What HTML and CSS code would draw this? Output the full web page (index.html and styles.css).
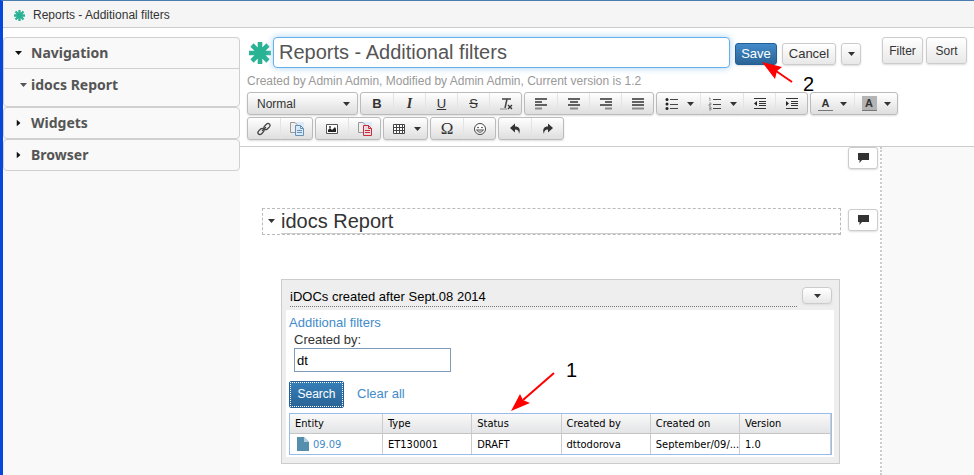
FILE: index.html
```html
<!DOCTYPE html>
<html lang="en">
<head>
<meta charset="utf-8">
<title>Reports - Additional filters</title>
<link rel="stylesheet" href="styles.css">
</head>
<body>
<svg class="defs" aria-hidden="true">
  <symbol id="star" viewBox="0 0 22 22"><path d="M11 0V22M0 11H22M3 3L19 19M19 3L3 19" stroke="#29b294" stroke-width="4.6" fill="none"/></symbol>
  <symbol id="caret" viewBox="0 0 7 4"><path d="M0 0H7L3.5 4Z" fill="currentColor"/></symbol>
  <symbol id="comment" viewBox="0 0 12 10"><path d="M1 0H12V7H5L2.500 10V7H1Z" fill="#333"/></symbol>
</svg>

<header class="tabbar"><svg class="tab-icon"><use href="#star"/></svg><span>Reports - Additional filters</span></header>

<div class="layout">
  <aside class="sidebar">
    <section class="panel open">
      <button class="panel-head"><svg class="caret"><use href="#caret"/></svg>Navigation</button>
      <a class="nav-item" href="#report"><svg class="caret"><use href="#caret"/></svg>idocs Report</a>
    </section>
    <section class="panel"><button class="panel-head"><svg class="caret side"><use href="#caret"/></svg>Widgets</button></section>
    <section class="panel"><button class="panel-head"><svg class="caret side"><use href="#caret"/></svg>Browser</button></section>
  </aside>

  <main class="main">
    <div class="editor-head">
      <div class="title-row">
        <svg class="title-icon"><use href="#star"/></svg>
        <input class="title-input" type="text" aria-label="Title" value="Reports - Additional filters">
        <div class="actions">
          <button class="btn primary">Save</button>
          <button class="btn cancel">Cancel</button>
          <button class="btn more" aria-label="More"><svg class="caret"><use href="#caret"/></svg></button>
        </div>
        <div class="tools">
          <button class="btn tool">Filter</button>
          <button class="btn tool">Sort</button>
        </div>
      </div>
      <p class="meta">Created by Admin Admin, Modified by Admin Admin, Current version is 1.2</p>
      <div class="toolbar">
        <div class="group"><button class="format">Normal<svg class="caret"><use href="#caret"/></svg></button></div>
        <div class="group">
          <button class="bold" aria-label="Bold">B</button>
          <button class="italic" aria-label="Italic">I</button>
          <button class="underline" aria-label="Underline">U</button>
          <button class="strike" aria-label="Strike">S</button>
          <button aria-label="Remove format"><svg class="icon" viewBox="0 0 16 16"><path d="M4 3H13M9 3L7 12" stroke="#444" stroke-width="1.500" fill="none"/><path d="M2 13H9" stroke="#888"/><path d="M10 9L14 13M14 9L10 13" stroke="#333" stroke-width="1.300"/></svg></button>
        </div>
        <div class="group">
          <button aria-label="Align left"><svg class="icon" viewBox="0 0 16 16"><path d="M2 3H14M2 6H9M2 9H14" stroke="#333" stroke-width="1.600"/><path d="M2 12.500H9" stroke="#888" stroke-width="2"/></svg></button>
          <button aria-label="Center"><svg class="icon" viewBox="0 0 16 16"><path d="M2 3H14M4 6H12M2 9H14" stroke="#333" stroke-width="1.600"/><path d="M4 12.500H12" stroke="#888" stroke-width="2"/></svg></button>
          <button aria-label="Align right"><svg class="icon" viewBox="0 0 16 16"><path d="M2 3H14M7 6H14M2 9H14" stroke="#333" stroke-width="1.600"/><path d="M7 12.500H14" stroke="#888" stroke-width="2"/></svg></button>
          <button aria-label="Justify"><svg class="icon" viewBox="0 0 16 16"><path d="M2 3H14M2 6H14M2 9H14" stroke="#333" stroke-width="1.600"/><path d="M2 12.500H14" stroke="#888" stroke-width="2"/></svg></button>
        </div>
        <div class="group">
          <button class="wide" aria-label="Bulleted list"><svg class="icon" viewBox="0 0 16 16"><path d="M6 3.500H14M6 8.500H14M6 12.500H14" stroke="#444"/><g fill="#222"><circle cx="3" cy="3.500" r="1.500"/><circle cx="3" cy="8" r="1.500"/><circle cx="3" cy="12.500" r="1.500"/></g></svg><svg class="caret"><use href="#caret"/></svg></button>
          <button class="wide" aria-label="Numbered list"><svg class="icon" viewBox="0 0 16 16"><path d="M6 3.500H14M6 8.500H14M6 12.500H14" stroke="#444"/><path d="M2 2H3V5M2 7H4V8.500H2V10H4M2 11H4V14H2M2 12.500H4" stroke="#777" stroke-width=".7" fill="none"/></svg><svg class="caret"><use href="#caret"/></svg></button>
          <button aria-label="Outdent"><svg class="icon" viewBox="0 0 16 16"><path d="M2 2.500H14M7 5.500H14M7 7.500H14M7 9.500H14M2 12.500H14" stroke="#333"/><path d="M2 7.500L5 5V10Z" fill="#222"/></svg></button>
          <button aria-label="Indent"><svg class="icon" viewBox="0 0 16 16"><path d="M2 2.500H14M7 5.500H14M7 7.500H14M7 9.500H14M2 12.500H14" stroke="#333"/><path d="M5 7.500L2 5V10Z" fill="#222"/></svg></button>
        </div>
        <div class="group">
          <button class="wide" aria-label="Text color"><span class="letter">A</span><svg class="caret"><use href="#caret"/></svg></button>
          <button class="wide" aria-label="Background color"><span class="letter filled">A</span><svg class="caret"><use href="#caret"/></svg></button>
        </div>
      </div>
      <div class="toolbar">
        <div class="group">
          <button aria-label="Link"><svg class="icon" viewBox="0 0 16 16"><g fill="none" stroke="#444" stroke-width="1.300"><rect x="7.500" y="3.500" width="7" height="4" rx="2" transform="rotate(-45 11 5.500)"/><rect x="1.500" y="8.500" width="7" height="4" rx="2" transform="rotate(-45 5 10.500)"/><path d="M6 10L10 6"/></g></svg></button>
          <button aria-label="Copy"><svg class="icon" viewBox="0 0 16 16"><path d="M5 1H15V15H5Z" fill="#dcebf7"/><path d="M1.500 1.500H6L8 3.500V11.500H1.500Z" fill="#eee" stroke="#999"/><path d="M6.500 4.500H11.500L14.500 7.500V14.500H6.500Z" fill="#d7e8f8" stroke="#6b91b2"/><path d="M11.500 4.500V7.500H14.500M8 9.500H13M8 11.500H13" stroke="#6b91b2" fill="none"/></svg></button>
        </div>
        <div class="group">
          <button aria-label="Image"><svg class="icon" viewBox="0 0 16 16"><path d="M2.500 3.500H13.500V12.500H2.500Z" fill="#fff" stroke="#555"/><path d="M4 11V9L6 7L8 9L11 6L12 8V11Z" fill="#222"/><circle cx="6" cy="6" r="1" fill="#333"/></svg></button>
          <button aria-label="Paste"><svg class="icon" viewBox="0 0 16 16"><path d="M5 1H15V15H5Z" fill="#dcebf7"/><path d="M1.500 1.500H6L8 3.500V11.500H1.500Z" fill="#eee" stroke="#999"/><path d="M6.500 4.500H11.500L14.500 7.500V14.500H6.500Z" fill="#eed9e0" stroke="#c5303b"/><path d="M11.500 4.500V7.500H14.500M8 9.500H13M8 11.500H13" stroke="#c5303b" fill="none"/></svg></button>
        </div>
        <div class="group">
          <button class="wide" aria-label="Table"><svg class="icon" viewBox="0 0 16 16"><path d="M2.500 3.500H13.500V12.500H2.500ZM2.500 6.500H13.500M2.500 9.500H13.500M5.500 3V13M8.500 3V13M11.500 3V13" fill="#fff" stroke="#444"/></svg><svg class="caret"><use href="#caret"/></svg></button>
        </div>
        <div class="group">
          <button class="omega" aria-label="Special character">Ω</button>
          <button aria-label="Smiley"><svg class="icon" viewBox="0 0 16 16"><circle cx="8" cy="8" r="5.500" fill="#fff" stroke="#444"/><circle cx="6" cy="6.500" r=".8" fill="#333"/><circle cx="10" cy="6.500" r=".8" fill="#333"/><path d="M4.500 9Q8 13.500 11.500 9Z" fill="none" stroke="#444"/></svg></button>
        </div>
        <div class="group">
          <button aria-label="Undo"><svg class="icon" viewBox="0 0 16 16"><path d="M3 7L8 2.500V5.500C12 5.500 14 8 12 13C12 10 11 8.500 8 8.500V11.500Z" fill="#333"/></svg></button>
          <button aria-label="Redo"><svg class="icon" viewBox="0 0 16 16"><path d="M13 7L8 2.500V5.500C4 5.500 2 8 4 13C4 10 5 8.500 8 8.500V11.500Z" fill="#333"/></svg></button>
        </div>
      </div>
    </div>

    <div class="canvas">
      <article class="document">
        <div class="block spacer">
          <div></div>
          <button class="comment" aria-label="Comment"><svg><use href="#comment"/></svg></button>
        </div>
        <div class="block" id="report">
          <div class="heading"><svg class="caret"><use href="#caret"/></svg><h1>idocs Report</h1></div>
          <button class="comment" aria-label="Comment"><svg><use href="#comment"/></svg></button>
        </div>
        <section class="widget">
          <header class="widget-head">
            <h2>iDOCs created after Sept.08 2014</h2>
            <button class="btn widget-menu" aria-label="Widget menu"><svg class="caret"><use href="#caret"/></svg></button>
          </header>
          <div class="widget-body">
            <a class="filters" href="#report">Additional filters</a>
            <div class="field"><label for="author">Created by:</label><input id="author" type="text" value="dt"></div>
            <div class="search-row"><button class="search">Search</button><a href="#report">Clear all</a></div>
            <table>
              <thead><tr><th class="first">Entity</th><th>Type</th><th>Status</th><th>Created by</th><th>Created on</th><th class="last">Version</th></tr></thead>
              <tbody><tr><td><a class="entity" href="#report"><svg viewBox="0 0 12 14"><path d="M0 0H7L12 5V14H0Z" fill="#568fae"/><path d="M7 0V5H12Z" fill="#b4d0df"/></svg>09.09</a></td><td>ET130001</td><td>DRAFT</td><td>dttodorova</td><td>September/09/...</td><td>1.0</td></tr></tbody>
            </table>
          </div>
          <div class="note note-one"><svg viewBox="0 0 44 40"><path d="M43 1L12 28" stroke="#f00" stroke-width="2"/><path d="M0 39L9 22L12 28L19 31Z" fill="#f00"/></svg><span>1</span></div>
        </section>
      </article>
      <div class="gutter"></div>
    </div>
    <div class="note note-two"><svg viewBox="0 0 32 22"><path d="M30 20L14 9" stroke="#f00" stroke-width="2"/><path d="M0 0L20 5L15 9L13 17Z" fill="#f00"/></svg><span>2</span></div>
  </main>
</div>
</body>
</html>
```
FILE: styles.css
```css
* { box-sizing: border-box; }
body {
  margin: 0;
  min-height: 100vh;
  display: flex;
  flex-direction: column;
  border-left: 3px solid #0648dc;
  border-top: 1px solid #4b7eb0;
  background: #fff;
  color: #333;
  font: 13px/18px "Liberation Sans", Arial, sans-serif;
}
button, input { font: inherit; color: inherit; margin: 0; }
button { padding: 0; cursor: pointer; }
a { color: #428bca; text-decoration: none; }
svg { display: block; flex: none; }
.defs { position: absolute; width: 0; height: 0; }
.caret { width: 7px; height: 4px; }
.caret.side { transform: rotate(-90deg); }

.tabbar {
  display: flex;
  align-items: center;
  gap: 8px;
  height: 27px;
  padding: 2px 0 0 11px;
  background: #f5f5f5;
  border-bottom: 1px solid #ccc;
  font-size: 12px;
}
.tab-icon { width: 11px; height: 11px; }

.layout { flex: 1; display: grid; grid-template-columns: 237px 1fr; }
.sidebar { margin-top: 9px; background: #f9f9f9; }
.panel { border: 1px solid #d0d0d0; border-radius: 4px; background: #f9f9f9; height: 32px; overflow: hidden; }
.panel.open { height: 70px; }
.panel-head, .nav-item {
  display: flex;
  align-items: center;
  gap: 9px;
  width: 100%;
  height: 30px;
  padding-left: 11px;
  border: 0;
  background: transparent;
  color: #555;
  font: bold 14px/18px "Noto Sans", sans-serif;
}
.panel-head .caret { color: #111; }
.open .panel-head { height: 31px; border-bottom: 1px solid #d0d0d0; }
.nav-item { gap: 4px; padding-left: 16px; height: 32px; }

.main { position: relative; min-width: 0; display: flex; flex-direction: column; }
.editor-head { height: 119px; padding: 9px 7px 0; border-bottom: 1px solid #ccc; }
.title-row { display: flex; }
.title-icon { width: 22px; height: 22px; margin: 5px 2px 0; }
.title-input {
  flex: 1;
  min-width: 0;
  height: 31px;
  padding: 0 5px;
  border: 1px solid #66afe9;
  border-radius: 4px;
  outline: 0;
  background: #fff;
  box-shadow: 0 0 7px #a8d2f3;
  color: #555;
  font-size: 20px;
}
.actions { display: flex; gap: 5px; margin: 6px 21px 0 5px; }
.tools { display: flex; gap: 3px; }
.btn {
  display: flex;
  align-items: center;
  justify-content: center;
  height: 22px;
  border: 1px solid #ccc;
  border-radius: 3px;
  background: linear-gradient(#fff, #e8e8e8);
  box-shadow: 0 1px 2px #ddd;
}
.actions .btn { width: 42px; }
.actions .cancel { width: 54px; }
.actions .more { width: 20px; }
.btn.primary { border-color: #245e96; background: linear-gradient(#428bca, #2a6496); color: #fff; }
.btn.tool { width: 41px; height: 27px; font-size: 12px; }
.meta { margin: 4px 0 2px; color: #999; font-size: 12px; }

.toolbar { display: flex; gap: 2px; margin-bottom: 2px; }
.group {
  display: flex;
  height: 23px;
  border: 1px solid #bbb;
  border-radius: 3px;
  background: linear-gradient(#fff, #dedede);
  box-shadow: 0 1px 2px #ddd;
}
.group button {
  display: flex;
  align-items: center;
  justify-content: center;
  gap: 7px;
  width: 32px;
  border: 0;
  background: transparent;
}
.group button + button { border-left: 1px solid #e4e4e4; }
.group .wide { width: 43px; }
.group .format { width: 109px; justify-content: space-between; padding: 0 7px 0 9px; font-size: 12px; }
.icon { width: 16px; height: 16px; }
.group .bold { font-size: 13px; font-weight: bold; }
.group .italic { font: italic bold 14px/16px "Liberation Serif", serif; }
.group .underline { text-decoration: underline; }
.group .strike { text-decoration: line-through; }
.group .omega { font: 17px/18px "Liberation Serif", serif; }
.letter { width: 15px; height: 15px; border-bottom: 1px solid #777; font-size: 11px; font-weight: bold; line-height: 14px; text-align: center; }
.filled { background: #b4b4b4; }

.canvas { flex: 1; display: grid; grid-template-columns: 1fr 92px; }
.document { min-width: 0; border-right: 2px dotted #ccc; }
.gutter { background: #f9f9f9; }
.block { display: grid; grid-template-columns: 1fr 30px; gap: 7px; margin: 0 2px 0 22px; }
.spacer { height: 61px; }
.comment {
  display: flex;
  align-items: center;
  justify-content: center;
  height: 22px;
  border: 1px solid #ccc;
  border-radius: 3px;
  background: #fff;
  box-shadow: 0 1px 2px #ddd;
}
.comment svg { width: 12px; height: 10px; }
#report .comment { margin-top: 1px; }
.heading { display: flex; align-items: flex-start; height: 27px; border: 1px dashed #bbb; }
.heading .caret { margin: 10px 6px 0 5px; }
.heading h1 { flex: 1; height: 25px; margin: 0; border-bottom: 1px solid #ccc; font-size: 20px; line-height: 24px; font-weight: normal; }

.widget { position: relative; margin: 44px 40px 11px 41px; padding: 0 5px 6px 4px; border: 1px solid #ccc; background: #eee; }
.widget-head { display: flex; gap: 5px; height: 30px; padding: 7px 2px 0 4px; }
.widget-head h2 { flex: 1; height: 20px; margin: 0; border-bottom: 1px dotted #777; color: #000; font-size: 13px; line-height: 19px; font-weight: normal; }
.widget-menu { width: 30px; height: 17px; border-radius: 4px; }
.widget-body { padding: 3px 2px 2px 3px; background: #fff; }
.filters { display: block; height: 18px; line-height: 20px; }
.field { margin-left: 5px; }
.field label { display: block; height: 17px; line-height: 17px; }
.field input { display: block; width: 157px; height: 24px; padding: 0 2px; border: 1px solid #7f9db9; background: #fff; color: #000; }
.search-row { display: flex; gap: 13px; margin: 9px 0 5px; line-height: 25px; }
.search {
  width: 55px;
  height: 27px;
  border: 1px solid #245e96;
  border-radius: 2px;
  background: linear-gradient(#357eb8, #2a6496);
  outline: 1px dotted #fff;
  outline-offset: -2px;
  color: #fff;
  font-size: 12px;
}
table { width: 100%; border: 1px solid #99bbe8; border-collapse: separate; border-spacing: 0; table-layout: fixed; color: #000; font: 11px/13px "DejaVu Sans Condensed", "DejaVu Sans", sans-serif; }
th, td { height: 20px; padding: 0 5px; border-right: 1px solid #ccc; text-align: left; font-weight: normal; white-space: nowrap; }
th { border-bottom: 1px solid #c5c5c5; background: linear-gradient(#f9f9f9, #e3e4e6); }
.first { width: 93px; }
.last { width: 91px; }
.entity { display: flex; align-items: center; gap: 4px; padding-left: 2px; }
.entity svg { width: 12px; height: 14px; }

.note { position: absolute; display: flex; pointer-events: none; color: #000; font-size: 20px; line-height: 22px; }
.note-one { left: 229px; top: 92px; gap: 11px; }
.note-one svg { width: 44px; height: 40px; }
.note-one span { margin-top: -13px; }
.note-two { left: 522px; top: 34px; gap: 9px; }
.note-two svg { width: 32px; height: 22px; }
.note-two span { margin-top: 11px; }
```
